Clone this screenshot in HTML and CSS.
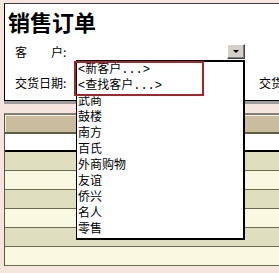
FILE: index.html
```html
<!DOCTYPE html>
<html lang="zh-CN">
<head>
    <meta charset="UTF-8">
    <title>销售订单</title>
    <link rel="stylesheet" href="styles.css">
</head>
<body>
    <div class="page">
        <div class="form">
            <h1 class="title">销售订单</h1>
            <div class="row first">
                <span class="label">客　　户:</span>
                <div class="combo">
                    <span class="combo-btn"><span class="arrow"></span></span>
                    <ul class="combo-list">
                        <li>&lt;新客户...&gt;</li>
                        <li>&lt;查找客户...&gt;</li>
                        <li>武商</li>
                        <li>鼓楼</li>
                        <li>南方</li>
                        <li>百氏</li>
                        <li>外商购物</li>
                        <li>友谊</li>
                        <li>侨兴</li>
                        <li>名人</li>
                        <li>零售</li>
                    </ul>
                    <div class="mark"></div>
                </div>
            </div>
            <div class="row second">
                <span class="label">交货日期:</span>
                <div class="field"></div>
                <span class="label next">交货地址:</span>
            </div>
        </div>

        <div class="grid">
            <div class="grid-head"></div>
            <div class="grid-new"></div>
            <div class="grid-row"></div>
            <div class="grid-row"></div>
            <div class="grid-row"></div>
            <div class="grid-row"></div>
            <div class="grid-row"></div>
            <div class="grid-row"></div>
        </div>
    </div>
</body>
</html>
```

FILE: styles.css
```css
html, body {
    overflow: hidden;
}
body {
    margin: 0;
    background-color: #f6e5de;
    font-family: "Noto Sans CJK SC", sans-serif;
    font-size: 12px;
    color: #000;
}
.page {
    width: 340px;
    padding: 3px 0 0 4px;
}
.form {
    box-sizing: border-box;
    height: 98px;
    background-color: #fff;
    border-top: 1px solid #404040;
    border-left: 1px solid #000;
    border-bottom: 1px solid #000;
    box-shadow: 0 3px 0 #9c9c9c;
}
.title {
    margin: 0;
    padding: 4px 0 0 3px;
    font-size: 22px;
    font-weight: bold;
    line-height: 26px;
}
.row {
    display: flex;
    align-items: center;
    height: 16px;
    padding-left: 10px;
}
.row.first {
    margin-top: 10px;
}
.row.second {
    margin-top: 15px;
}
.label {
    width: 61px;
    line-height: 16px;
    white-space: nowrap;
}
.label.next {
    margin-left: 14px;
}
.combo {
    position: relative;
    display: flex;
    justify-content: flex-end;
    align-items: flex-start;
    width: 169px;
    height: 16px;
}
.combo-btn {
    box-sizing: border-box;
    display: flex;
    align-items: center;
    justify-content: center;
    width: 18px;
    height: 15px;
    background-color: #d4d0c8;
    border-top: 1px solid #fff;
    border-left: 1px solid #fff;
    border-right: 1px solid #404040;
    border-bottom: 1px solid #404040;
    box-shadow: inset -1px -1px 0 #808080;
}
.arrow {
    width: 0;
    height: 0;
    border-left: 3px solid transparent;
    border-right: 3px solid transparent;
    border-top: 3px solid #000;
}
.combo-list {
    position: absolute;
    top: 16px;
    left: 0;
    right: 0;
    z-index: 2;
    margin: 0;
    padding: 0;
    list-style: none;
    background-color: #fff;
    border: 2px solid #000;
    border-left-width: 1px;
    font-family: "Liberation Mono", "Noto Sans CJK SC", monospace;
}
.combo-list li {
    height: 16px;
    line-height: 16px;
    padding-left: 1px;
    white-space: nowrap;
}
.mark {
    position: absolute;
    top: 17px;
    left: -2px;
    z-index: 3;
    box-sizing: border-box;
    width: 130px;
    height: 35px;
    border: 2px solid #a0282c;
}
.field {
    width: 169px;
    height: 16px;
}
.grid {
    margin-top: 12px;
    border-top: 2px solid #808078;
    border-left: 1px solid #5a5a3c;
}
.grid-head {
    height: 17px;
    background-color: #c9bd9e;
    box-shadow: inset 1px 1px 0 #f2eee0;
    border-bottom: 2px solid #5e5e44;
}
.grid-new {
    height: 16px;
    background-color: #fff;
    border-bottom: 2px solid #000;
}
.grid-row {
    height: 18px;
    background-color: #dfdfbf;
    border-bottom: 1px solid #6c6c50;
}
.grid-row:nth-child(even) {
    background-color: #f9f9e2;
}
```
